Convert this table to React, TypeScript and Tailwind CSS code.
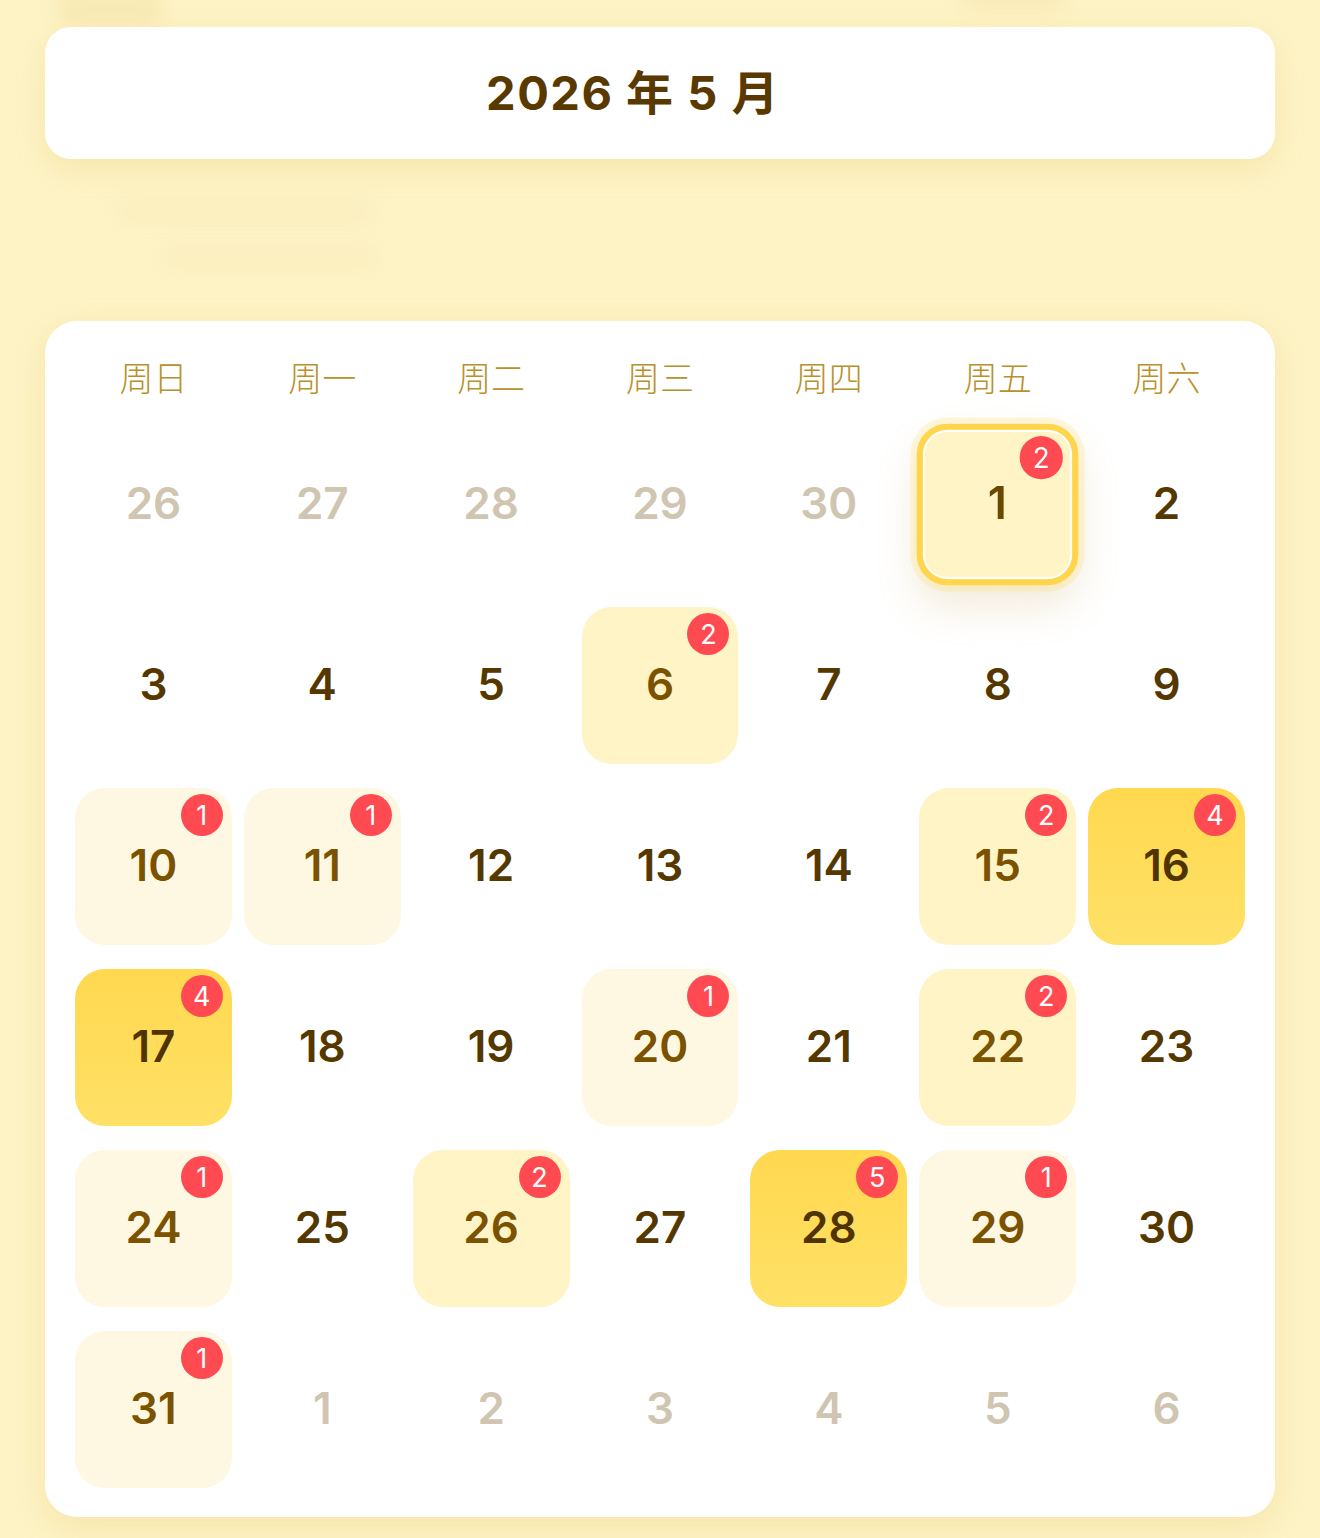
import React from "react";

type Cell = { d: number; other?: boolean; level?: number; count?: number; today?: boolean };

const rows: Cell[][] = [
  [
    { d: 26, other: true },
    { d: 27, other: true },
    { d: 28, other: true },
    { d: 29, other: true },
    { d: 30, other: true },
    { d: 1, level: 2, count: 2, today: true },
    { d: 2 },
  ],
  [{ d: 3 }, { d: 4 }, { d: 5 }, { d: 6, level: 2, count: 2 }, { d: 7 }, { d: 8 }, { d: 9 }],
  [
    { d: 10, level: 1, count: 1 },
    { d: 11, level: 1, count: 1 },
    { d: 12 },
    { d: 13 },
    { d: 14 },
    { d: 15, level: 2, count: 2 },
    { d: 16, level: 4, count: 4 },
  ],
  [
    { d: 17, level: 4, count: 4 },
    { d: 18 },
    { d: 19 },
    { d: 20, level: 1, count: 1 },
    { d: 21 },
    { d: 22, level: 2, count: 2 },
    { d: 23 },
  ],
  [
    { d: 24, level: 1, count: 1 },
    { d: 25 },
    { d: 26, level: 2, count: 2 },
    { d: 27 },
    { d: 28, level: 5, count: 5 },
    { d: 29, level: 1, count: 1 },
    { d: 30 },
  ],
  [
    { d: 31, level: 1, count: 1 },
    { d: 1, other: true },
    { d: 2, other: true },
    { d: 3, other: true },
    { d: 4, other: true },
    { d: 5, other: true },
    { d: 6, other: true },
  ],
];

const weekdays = ["周日", "周一", "周二", "周三", "周四", "周五", "周六"];

const FONT = "font-['Inter','Noto_Sans_CJK_SC',sans-serif]";

function Badge({ n }: { n: number }) {
  return (
    <div className="absolute top-[6px] right-[9px] w-[42px] h-[42px] rounded-full bg-[#ff4a52] flex items-center justify-center text-white text-[27px] leading-none font-normal">
      {n}
    </div>
  );
}

function DayCell({ c }: { c: Cell }) {
  if (c.other) {
    return (
      <div className="h-[157px] flex items-center justify-center pb-[3px] text-[44px] font-semibold text-[#cfc5b1]">
        {c.d}
      </div>
    );
  }
  if (c.today) {
    return (
      <div className="relative h-[157px] rounded-[30px] border-[6px] border-[#ffd54d] bg-[#fef4c6] scale-[1.03] flex items-center justify-center pb-[3px] text-[44px] font-semibold text-[#6b4800] shadow-[0_0_0_6px_rgba(255,214,80,0.2),0_20px_40px_rgba(190,150,60,0.2),inset_0_0_0_2px_rgba(255,255,255,0.85)]">
        {c.d}
        {c.count ? <Badge n={c.count} /> : null}
      </div>
    );
  }
  let bg = "";
  let color = "text-[#553700]";
  if (c.level === 1) {
    bg = "bg-[#fef8e2]";
    color = "text-[#7a5200]";
  } else if (c.level === 2 || c.level === 3) {
    bg = "bg-[#fff4c6]";
    color = "text-[#7a5200]";
  } else if (c.level && c.level >= 4) {
    bg = "bg-gradient-to-b from-[#ffd84f] to-[#ffe166]";
    color = "text-[#4f3400]";
  }
  return (
    <div
      className={`relative h-[157px] rounded-[30px] flex items-center justify-center pb-[3px] text-[44px] font-semibold ${bg} ${color}`}
    >
      {c.d}
      {c.count ? <Badge n={c.count} /> : null}
    </div>
  );
}

export default function App() {
  return (
    <div className={`relative min-h-[1538px] bg-[#fdf3c5] px-[45px] pt-[27px] overflow-hidden ${FONT}`}>
      {/* faint blurred decorations at the very top */}
      <div className="absolute left-[55px] top-[-10px] w-[110px] h-[36px] rounded-full bg-[#f3e2a6] opacity-50 blur-[8px]" />
      <div className="absolute left-[960px] top-[-14px] w-[110px] h-[24px] rounded-full bg-[#f3e2a6] opacity-50 blur-[10px]" />

      <div className="relative h-[132px] rounded-[26px] bg-white flex items-center justify-center pr-[54px] shadow-[0_10px_30px_rgba(215,175,60,0.18)]">
        <div className="text-[47px] font-bold text-[#5a3900] tracking-[1.5px]">2026 年 5 月</div>
      </div>

      <div className="h-[162px] flex flex-col gap-[22px] pt-[40px]">
        <div className="ml-[70px] w-[260px] h-[24px] rounded-full bg-[#f6e5ae] opacity-30 blur-[10px]" />
        <div className="ml-[115px] w-[220px] h-[24px] rounded-full bg-[#f6e5ae] opacity-30 blur-[10px]" />
      </div>

      <div className="rounded-[32px] bg-white px-[30px] pt-[30px] pb-[29px] shadow-[0_10px_34px_rgba(215,175,60,0.2)]">
        <div className="grid grid-cols-7 gap-x-[12px] h-[54px] mb-[21px]">
          {weekdays.map((w) => (
            <div
              key={w}
              className="flex items-center justify-center pb-[6px] text-[34px] text-[#b8912c] font-['Noto_Sans_CJK_SC',sans-serif] font-light"
            >
              {w}
            </div>
          ))}
        </div>
        <div className="grid grid-cols-7 gap-x-[12px] gap-y-[24px]">
          {rows.flat().map((c, i) => (
            <DayCell key={i} c={c} />
          ))}
        </div>
      </div>
    </div>
  );
}
